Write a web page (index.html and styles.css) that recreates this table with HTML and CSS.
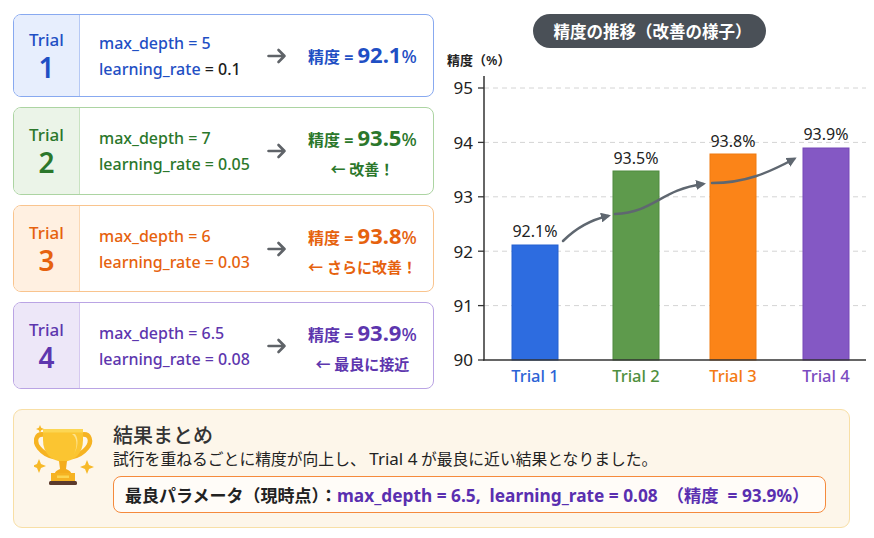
FILE: index.html
```html
<!DOCTYPE html>
<html lang="ja">
<head>
<meta charset="utf-8">
<link rel="stylesheet" href="styles.css">
</head>
<body>
<div class="page">
  <div class="top">
    <div class="cards">
      <div class="card c-blue c1">
        <div class="tag"><span class="t">Trial</span><span class="n">1</span></div>
        <div class="body">
          <div class="params">
            <div>max_depth = 5</div>
            <div>learning_rate <span class="dark">= 0.1</span></div>
          </div>
          <div class="arrow"><svg width="20" height="16" viewBox="0 0 20 16"><path d="M1.5 8 H17.5 M11.5 2 L17.5 8 L11.5 14" fill="none" stroke="#5f6368" stroke-width="2.6" stroke-linecap="round" stroke-linejoin="round"/></svg></div>
          <div class="result">
            <div class="acc">精度 = <span class="big">92.1</span><span class="pct">%</span></div>
          </div>
        </div>
      </div>
      <div class="card c-green">
        <div class="tag"><span class="t">Trial</span><span class="n">2</span></div>
        <div class="body">
          <div class="params">
            <div>max_depth = 7</div>
            <div>learning_rate = 0.05</div>
          </div>
          <div class="arrow"><svg width="20" height="16" viewBox="0 0 20 16"><path d="M1.5 8 H17.5 M11.5 2 L17.5 8 L11.5 14" fill="none" stroke="#5f6368" stroke-width="2.6" stroke-linecap="round" stroke-linejoin="round"/></svg></div>
          <div class="result">
            <div class="acc">精度 = <span class="big">93.5</span><span class="pct">%</span></div>
            <div class="note">← 改善！</div>
          </div>
        </div>
      </div>
      <div class="card c-orange">
        <div class="tag"><span class="t">Trial</span><span class="n">3</span></div>
        <div class="body">
          <div class="params">
            <div>max_depth = 6</div>
            <div>learning_rate = 0.03</div>
          </div>
          <div class="arrow"><svg width="20" height="16" viewBox="0 0 20 16"><path d="M1.5 8 H17.5 M11.5 2 L17.5 8 L11.5 14" fill="none" stroke="#5f6368" stroke-width="2.6" stroke-linecap="round" stroke-linejoin="round"/></svg></div>
          <div class="result">
            <div class="acc">精度 = <span class="big">93.8</span><span class="pct">%</span></div>
            <div class="note">← さらに改善！</div>
          </div>
        </div>
      </div>
      <div class="card c-purple">
        <div class="tag"><span class="t">Trial</span><span class="n">4</span></div>
        <div class="body">
          <div class="params">
            <div>max_depth = 6.5</div>
            <div>learning_rate = 0.08</div>
          </div>
          <div class="arrow"><svg width="20" height="16" viewBox="0 0 20 16"><path d="M1.5 8 H17.5 M11.5 2 L17.5 8 L11.5 14" fill="none" stroke="#5f6368" stroke-width="2.6" stroke-linecap="round" stroke-linejoin="round"/></svg></div>
          <div class="result">
            <div class="acc">精度 = <span class="big">93.9</span><span class="pct">%</span></div>
            <div class="note">← 最良に接近</div>
          </div>
        </div>
      </div>
    </div>

    <div class="chart-col">
      <div class="pill">精度の推移（改善の様子）</div>
      <svg class="chart" width="434" height="341" viewBox="440 48 434 341" xmlns="http://www.w3.org/2000/svg">
        <defs>
          <marker id="ah" viewBox="0 0 10 10" refX="7" refY="5" markerWidth="4" markerHeight="4" orient="auto">
            <path d="M0 0 L10 5 L0 10 z" fill="#5f6770"/>
          </marker>
        </defs>
        <text x="447" y="65" class="ylab">精度（%）</text>
        <g class="grid">
          <line x1="484" y1="88" x2="866" y2="88"/>
          <line x1="484" y1="142.4" x2="866" y2="142.4"/>
          <line x1="484" y1="196.8" x2="866" y2="196.8"/>
          <line x1="484" y1="251.2" x2="866" y2="251.2"/>
          <line x1="484" y1="305.6" x2="866" y2="305.6"/>
        </g>
        <g class="ticks">
          <line x1="478" y1="88" x2="484" y2="88"/>
          <line x1="478" y1="142.4" x2="484" y2="142.4"/>
          <line x1="478" y1="196.8" x2="484" y2="196.8"/>
          <line x1="478" y1="251.2" x2="484" y2="251.2"/>
          <line x1="478" y1="305.6" x2="484" y2="305.6"/>
          <line x1="478" y1="360" x2="484" y2="360"/>
        </g>
        <g class="ynum">
          <text x="473" y="94">95</text>
          <text x="473" y="148.5">94</text>
          <text x="473" y="203">93</text>
          <text x="473" y="257.5">92</text>
          <text x="473" y="312">91</text>
          <text x="473" y="366">90</text>
        </g>
        <rect x="512" y="245" width="46" height="115" fill="#2d6ce0" stroke="#2560cf" stroke-width="1"/>
        <rect x="613" y="171" width="46" height="189" fill="#5e9a4c" stroke="#4f8a3e" stroke-width="1"/>
        <rect x="710" y="154" width="46" height="206" fill="#fb8418" stroke="#ef7a10" stroke-width="1"/>
        <rect x="803" y="148" width="46" height="212" fill="#8458c4" stroke="#7749b8" stroke-width="1"/>
        <line class="axis" x1="484" y1="76" x2="484" y2="360.5"/>
        <line class="axis" x1="483" y1="360" x2="866" y2="360"/>
        <g class="val">
          <text x="535" y="237">92.1%</text>
          <text x="636" y="164">93.5%</text>
          <text x="733" y="147">93.8%</text>
          <text x="826" y="140">93.9%</text>
        </g>
        <g class="xl">
          <text x="535" y="382" fill="#2b63d6">Trial 1</text>
          <text x="636" y="382" fill="#4f8f3e">Trial 2</text>
          <text x="733" y="382" fill="#f47a12">Trial 3</text>
          <text x="826" y="382" fill="#7a4cc0">Trial 4</text>
        </g>
        <g class="trend">
          <path d="M563 241 C 575 229, 590 220, 608 216" marker-end="url(#ah)"/>
          <path d="M615 214 C 655 212, 660 190, 703 184" marker-end="url(#ah)"/>
          <path d="M712 183 C 745 183, 768 173, 794 159" marker-end="url(#ah)"/>
        </g>
      </svg>
    </div>
  </div>

  <div class="summary">
    <svg class="trophy" width="60" height="62" viewBox="0 0 60 62" xmlns="http://www.w3.org/2000/svg">
      <path d="M6 1 l1.2 2.8 l2.8 1.2 l-2.8 1.2 l-1.2 2.8 l-1.2 -2.8 l-2.8 -1.2 l2.8 -1.2 z" fill="#f7b928"/>
      <path d="M5 35 l2 5 l5 2 l-5 2 l-2 5 l-2 -5 l-5 -2 l5 -2 z" fill="#f7b928"/>
      <path d="M53 36 l2 5 l5 2 l-5 2 l-2 5 l-2 -5 l-5 -2 l5 -2 z" fill="#f7b928"/>
      <path d="M12 11 C 1 8, 0 18, 5 24 C 9 29, 15 32, 20 33" fill="none" stroke="#f6b322" stroke-width="4.5" stroke-linecap="round"/>
      <path d="M46 11 C 57 8, 58 18, 53 24 C 49 29, 43 32, 38 33" fill="none" stroke="#f6b322" stroke-width="4.5" stroke-linecap="round"/>
      <path d="M9 5 H49 V16 C49 30, 40 37, 29 38 C18 37, 9 30, 9 16 Z" fill="#fbc531"/>
      <path d="M9 5 H49 V8.5 H9 Z" fill="#fcd653"/>
      <path d="M38 10 C 43 13, 44 22, 40 30 C 44 23, 45 15, 41 10 Z" fill="#fde28a"/>
      <path d="M25 37 H33 L32 45 C35 46, 37 48, 37 49 H21 C21 48, 23 46, 26 45 Z" fill="#f4ad1c"/>
      <rect x="17" y="49" width="24" height="8" fill="#f6b322"/>
      <rect x="23" y="51.5" width="12" height="2.5" fill="#fcd54f"/>
      <rect x="15" y="57" width="28" height="4" rx="1.5" fill="#5b3a2c"/>
    </svg>
    <div class="sum-body">
      <div class="sum-title">結果まとめ</div>
      <div class="sum-text">試行を重ねるごとに精度が向上し、 <span class="lat">Trial 4</span> が最良に近い結果となりました。</div>
      <div class="best"><span class="best-k">最良パラメータ（現時点）：</span><span class="best-v">max_depth = 6.5,&nbsp; learning_rate = 0.08 &nbsp;（精度&nbsp; = 93.9%）</span></div>
    </div>
  </div>
</div>
</body>
</html>
```

FILE: styles.css
```css
* { box-sizing: border-box; }
html, body { margin: 0; padding: 0; background: #ffffff; }
body {
  width: 874px;
  height: 538px;
  overflow: hidden;
  font-family: "Noto Sans", "Noto Sans CJK JP", sans-serif;
  color: #222;
}
.page {
  padding: 14px 0 0 13px;
}
.top {
  display: flex;
  gap: 6px;
  height: 375px;
}
.cards {
  width: 421px;
  display: flex;
  flex-direction: column;
  gap: 10px;
}
.card {
  display: flex;
  height: 88px;
  border: 1.5px solid;
  border-radius: 8px;
  background: #fff;
  overflow: hidden;
}
.card.c1 { height: 83px; }
.card:nth-child(3), .card:nth-child(4) { height: 87px; }
.tag {
  width: 66px;
  flex: none;
  display: flex;
  flex-direction: column;
  align-items: center;
  justify-content: center;
  border-right: 1.5px solid;
}
.tag .t { font-size: 17px; line-height: 22px; font-weight: 500; }
.tag .n { font-size: 28px; line-height: 32px; font-weight: 600; }
.body {
  flex: 1;
  display: flex;
  align-items: center;
  padding-left: 19px;
}
.params {
  width: 168px;
  font-size: 16px;
  line-height: 26px;
  font-weight: 500;
  white-space: nowrap;
}
.dark { color: #1c1c1c; }
.arrow {
  width: 41px;
  height: 16px;
  display: flex;
  align-items: center;
}
.arrow svg { display: block; }
.result {
  display: flex;
  flex-direction: column;
  align-items: center;
}
.acc {
  font-size: 16px;
  font-weight: 700;
  line-height: 28px;
  white-space: nowrap;
}
.acc .big { font-size: 22px; }
.acc .pct { font-size: 18px; font-weight: 500; }
.note {
  font-size: 15px;
  font-weight: 600;
  line-height: 20px;
  margin-top: 5px;
}
.c-blue { border-color: #88a9f0; color: #1f4fc4; }
.c-blue .tag { background: #e7eefd; border-color: #b6c9f5; }
.c-green { border-color: #acd4a2; color: #2b772b; }
.c-green .tag { background: #ebf4e8; border-color: #c9e3c2; }
.c-orange { border-color: #f9c48e; color: #e6620e; }
.c-orange .tag { background: #fff0e1; border-color: #fbd8b4; }
.c-purple { border-color: #baa4e4; color: #5d36ae; }
.c-purple .tag { background: #ede7f8; border-color: #d6c9f0; }

.chart-col {
  width: 434px;
  display: flex;
  flex-direction: column;
}
.pill {
  align-self: flex-start;
  margin-left: 93px;
  width: 233px;
  height: 34px;
  border-radius: 17px;
  background: #4a5057;
  color: #fff;
  font-family: "Noto Sans CJK JP", sans-serif;
  font-size: 16.5px;
  font-weight: 700;
  line-height: 34px;
  text-align: center;
  padding-left: 6px;
  white-space: nowrap;
}
.chart { display: block; overflow: visible; }
.chart text { font-family: "Noto Sans", "Noto Sans CJK JP", sans-serif; }
.ylab { font-size: 13px; font-weight: 600; fill: #222; }
.grid line { stroke: #d4d4d4; stroke-width: 1; stroke-dasharray: 5 4; }
.ticks line { stroke: #333; stroke-width: 1.3; }
.axis { stroke: #333; stroke-width: 1.5; }
.ynum text { font-size: 17px; text-anchor: end; fill: #222; }
.val text { font-size: 16px; text-anchor: middle; fill: #222; }
.xl text { font-size: 16.5px; font-weight: 500; text-anchor: middle; }
.trend path { fill: none; stroke: #5f6770; stroke-width: 2.5; stroke-linecap: round; }

.summary {
  margin-top: 20px;
  width: 837px;
  height: 119px;
  display: flex;
  gap: 19px;
  padding: 12px 0 0 20px;
  background: #fdf6ea;
  border: 1px solid #f8dfa6;
  border-radius: 9px;
}
.trophy { flex: none; margin-top: 2px; }
.sum-body {
  display: flex;
  flex-direction: column;
  align-items: flex-start;
}
.sum-title {
  font-family: "Noto Sans CJK JP", sans-serif;
  font-size: 20px;
  line-height: 26px;
  font-weight: 500;
  color: #333;
}
.sum-text {
  font-family: "Noto Sans CJK JP", sans-serif;
  font-size: 15.8px;
  line-height: 22px;
  color: #222;
  white-space: nowrap;
}
.sum-text .lat { font-family: "Noto Sans", sans-serif; font-size: 17px; }
.best {
  margin-top: 6px;
  width: 713px;
  height: 37px;
  display: flex;
  align-items: center;
  padding-left: 11px;
  background: #fffcf8;
  border: 1.5px solid #f58a3c;
  border-radius: 8px;
  font-size: 17.3px;
  font-weight: 700;
  white-space: nowrap;
}
.best-k { color: #222; font-family: "Noto Sans CJK JP", sans-serif; font-size: 17px; }
.best-v { color: #5a2fb0; }
```
